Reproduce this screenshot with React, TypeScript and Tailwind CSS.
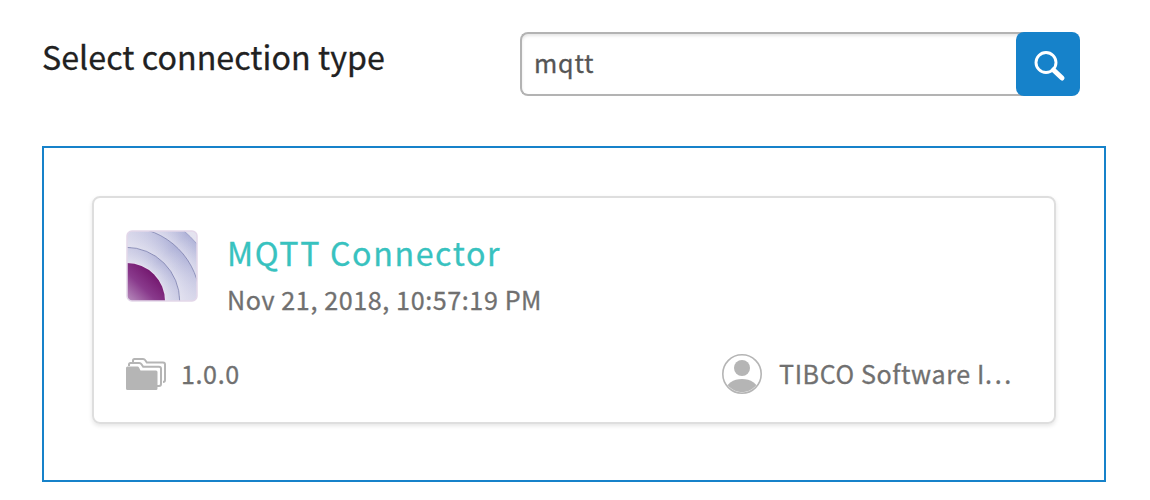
function FoldersIcon() {
  return (
    <svg className="h-8 w-10 shrink-0" viewBox="0 0 40 32" fill="none">
      <path d="M7 4V2.5Q7 1 8.5 1H17Q18.500 1 19.300 2.300L20.800 4.500H37Q39 4.500 39 6.500V22Q39 24 37 24" stroke="#b5b5b5" strokeWidth="2" />
      <path d="M3 8V6.500Q3 5 4.500 5H13.200Q14.700 5 15.500 6.200L17.200 8.800H33Q35 8.800 35 10.800V26Q35 28 33 28H31" stroke="#b5b5b5" strokeWidth="2" />
      <path d="M0 10Q0 8.500 1.500 8.500H11.500Q12.500 8.500 13 9.500L14.500 12.500H30Q31.500 12.500 31.500 14V30.500Q31.500 32 30 32H1.500Q0 32 0 30.500Z" fill="#b5b5b5" />
    </svg>
  );
}

function UserIcon() {
  return (
    <svg className="h-10 w-10 shrink-0" viewBox="0 0 40 40">
      <clipPath id="avatar"><circle cx="20" cy="20" r="18.200" /></clipPath>
      <circle cx="20" cy="20" r="19.200" fill="none" stroke="#b5b5b5" strokeWidth="1.600" />
      <circle cx="20" cy="14" r="8" fill="#b5b5b5" />
      <ellipse cx="20" cy="36" rx="16" ry="11" fill="#b5b5b5" clipPath="url(#avatar)" />
    </svg>
  );
}

function MqttLogo() {
  return (
    <svg className="h-18 w-18 shrink-0" viewBox="0 0 72 72">
      <defs>
        <clipPath id="tile"><rect x="1" y="1" width="70" height="70" rx="5" /></clipPath>
        <linearGradient id="purple" gradientUnits="userSpaceOnUse" x1="1" y1="72" x2="28" y2="44">
          <stop offset="0" stopColor="#bb93c1" /><stop offset=".55" stopColor="#893a8c" /><stop offset="1" stopColor="#74186f" />
        </linearGradient>
        <radialGradient id="bands" gradientUnits="userSpaceOnUse" cx="0" cy="71" r="100">
          <stop offset=".38" stopColor="#dddded" /><stop offset=".537" stopColor="#b3b5d9" />
          <stop offset=".537" stopColor="#d9d9eb" /><stop offset=".74" stopColor="#adb0d7" />
          <stop offset=".74" stopColor="#d6d6ea" /><stop offset=".91" stopColor="#aeb1d7" />
          <stop offset=".91" stopColor="#e4e3ef" />
        </radialGradient>
        <linearGradient id="shine" gradientUnits="userSpaceOnUse" x1="0" y1="0" x2="72" y2="72">
          <stop offset="0" stopColor="#f0edf5" stopOpacity=".6" /><stop offset=".45" stopColor="#ecebf5" stopOpacity="0" />
          <stop offset=".62" stopColor="#ecebf5" stopOpacity=".1" /><stop offset="1" stopColor="#f0edf5" stopOpacity=".65" />
        </linearGradient>
      </defs>
      <g clipPath="url(#tile)">
        <rect width="72" height="72" fill="url(#bands)" />
        <rect width="72" height="72" fill="url(#shine)" />
        <circle cx="0" cy="71" r="91" fill="none" stroke="#999cc3" strokeWidth=".7" />
        <circle cx="0" cy="71" r="74" fill="none" stroke="#888bb6" strokeWidth=".9" />
        <circle cx="0" cy="71" r="53.700" fill="none" stroke="#888bb6" strokeWidth=".9" />
        <circle cx="1" cy="71" r="38.800" fill="#e7e2f0" />
        <circle cx="1" cy="71" r="38" fill="url(#purple)" />
      </g>
      <rect x="1" y="1" width="70" height="70" rx="5" fill="none" stroke="#e3d7e9" strokeWidth="1.500" />
    </svg>
  );
}

export default function App() {
  return (
    <main className="h-[500px] w-[1150px] overflow-hidden bg-white pl-[42px] font-['Noto_Sans_CJK_SC',sans-serif] text-[#707070] [-webkit-text-stroke:0.3px]">
      <header className="flex h-[146px] items-start pt-[30px]">
        <h1 className="w-[478px] pt-[1px] text-[32.200px] leading-[50px] tracking-[0.050px] text-[#212121]">Select connection type</h1>
        <div className="mt-[2px] flex h-16 w-[560px]">
          <div className="-mr-2 h-16 w-[504px] rounded-l-lg border-2 border-r-0 border-[#b3b3b3] pl-[12px] text-[25.100px] leading-[56px] tracking-[0.800px] text-[#555] shadow-[inset_0_2px_3px_#0000001a]">mqtt</div>
          <button className="z-10 flex h-16 w-16 items-center justify-center rounded-lg bg-[#1682ca]" aria-label="Search">
            <svg className="h-16 w-16" viewBox="0 0 64 64" fill="none" stroke="white" strokeLinecap="round">
              <circle cx="30" cy="30.500" r="10" strokeWidth="2.900" />
              <path d="M37.500 38 46 46" strokeWidth="5" />
            </svg>
          </button>
        </div>
      </header>
      <section className="h-[336px] w-[1064px] border-2 border-[#1682ca] p-12">
        <article className="h-[228px] w-[964px] rounded-lg border-2 border-[#dedede] px-8 pt-8 shadow-[0_2px_4px_#0000001a]">
          <div className="flex h-[122px]">
            <MqttLogo />
            <div className="ml-[29px]">
              <h2 className="h-[46px] text-[32.200px] leading-[44px] tracking-[1.600px] text-[#38c2bf]">MQTT Connector</h2>
              <p className="text-[25.100px] leading-[46px] tracking-[0.600px]">Nov 21, 2018, 10:57:19 PM</p>
            </div>
          </div>
          <div className="flex h-[44px] items-center justify-between text-[25.100px] leading-[42px] tracking-[0.600px]">
            <div className="flex items-center gap-[15px]"><FoldersIcon /><span className="h-[44px]">1.0.0</span></div>
            <div className="flex w-[300px] items-center gap-[17px]"><UserIcon /><span className="h-[44px] whitespace-nowrap">TIBCO Software I<span className="tracking-[2.700px]">...</span></span></div>
          </div>
        </article>
      </section>
    </main>
  );
}
